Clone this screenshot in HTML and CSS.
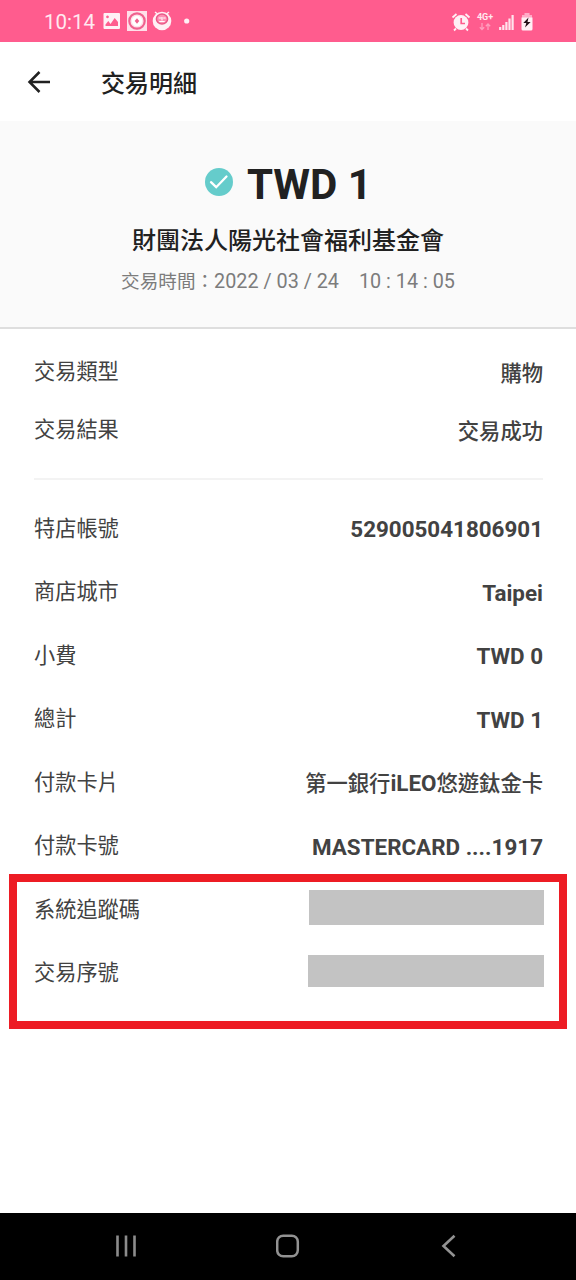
FILE: index.html
```html
<!DOCTYPE html>
<html lang="zh-Hant">
<head>
<meta charset="utf-8">
<title>交易明細</title>
<link rel="stylesheet" href="styles.css">
</head>
<body>
<div class="screen">
  <div class="status">
    <span class="clock">10:14</span>
    <svg class="notices" width="96" height="24" viewBox="0 0 96 24">
      <path fill="#fff0f5" fill-rule="evenodd" d="M4.500 3h14.500q1 0 1 1v14q0 1-1 1H4.500q-1 0-1-1V4q0-1 1-1zM5.500 16h12.500v-4l-3.300-4-4.200 6-2.200-3-2.800 3.500zM7.500 5.500a1.400 1.400 0 1 0 .01 0z"/>
      <rect x="27" y="1" width="20" height="20" fill="#ffdfe9"/>
      <circle cx="37" cy="11" r="7.700" fill="none" stroke="#f0608e" stroke-width="2.200"/>
      <circle cx="37" cy="11" r="5.200" fill="#fff"/>
      <path d="M37 8.300l2.300 2.700-2.300 2.700-2.300-2.700z" fill="#f0608e"/>
      <circle cx="62" cy="11" r="9.300" fill="#fff0f5"/>
      <path d="M55 2l2.500 2M69 2l-2.500 2" stroke="#fff0f5" stroke-width="1.500"/>
      <ellipse cx="62" cy="9" rx="5.600" ry="5" fill="#ff8fb4" stroke="#e95a88" stroke-width="1.500"/>
      <path d="M58.700 8h2.500M63.200 8h2.500M59.200 11.500h5.500M62 7v3.500" stroke="#fff" stroke-width="1.100"/>
      <circle cx="86.700" cy="11" r="2.600" fill="#fff0f5"/>
    </svg>
    <div class="signals">
      <svg width="20" height="20" viewBox="0 0 20 20">
        <circle cx="10" cy="10.500" r="7.400" fill="#fff0f5"/>
        <path d="M1.500 5.500l4-3.500M18.500 5.500l-4-3.500M5 16.500l-2 2M15 16.500l2 2" stroke="#fff0f5" stroke-width="1.800"/>
        <path d="M10.200 6v5.500H14" fill="none" stroke="#ff5c8e" stroke-width="1.700"/>
      </svg>
      <div class="network">
        <span>4G+</span>
        <svg width="12" height="8" viewBox="0 0 12 8"><path d="M3 0v6M.8 4.200L3 6.500l2.200-2.300M9 7V1M6.800 3.200L9 1l2.200 2.200" fill="none" stroke="#ff9dbd" stroke-width="1.300"/></svg>
      </div>
      <svg width="15" height="18" viewBox="0 0 15 18">
        <path d="M1.200 14v3M4.300 12v5M7.400 9v8M10.500 5.500V17M13.600 2v15" stroke="#ffe4ed" stroke-width="2.200"/>
      </svg>
      <svg class="battery" width="12" height="18" viewBox="0 0 12 18">
        <path d="M3.500 0h5v2H11v3H1V2h2.500z" fill="#ffabc7"/>
        <path d="M.5 4.500h11V16q0 1.500-1.500 1.500H2Q.5 17.500.5 16z" fill="#fff0f5"/>
        <path d="M7.500 4.500L2.300 10h3L4 14.500 9.600 9H6.500z" fill="#241018"/>
      </svg>
    </div>
  </div>

  <header class="bar">
    <svg width="24" height="24" viewBox="0 0 24 24"><path d="M23 12H3M12.500 2L2.500 12l10 10" fill="none" stroke="#212121" stroke-width="2.500"/></svg>
    <h1>交易明細</h1>
  </header>

  <section class="summary">
    <div class="amount">
      <svg width="28" height="28" viewBox="0 0 28 28"><circle cx="14" cy="14" r="14" fill="#65cccb"/><path d="M6 14.200l5.200 5L21.500 8.500" fill="none" stroke="#fff" stroke-width="2.300" stroke-linecap="round"/></svg>
      <span>TWD 1</span>
    </div>
    <div class="merchant">財團法人陽光社會福利基金會</div>
    <div class="time"><span>交易時間：</span><span class="date">2022 / 03 / 24</span><span class="hour">10 : 14 : 05</span></div>
  </section>

  <main>
    <section class="group short">
      <div class="row"><span class="label">交易類型</span><span class="value">購物</span></div>
      <div class="row"><span class="label">交易結果</span><span class="value">交易成功</span></div>
    </section>
    <hr class="divider">
    <section class="group">
      <div class="row"><span class="label">特店帳號</span><span class="value latin">529005041806901</span></div>
      <div class="row"><span class="label">商店城市</span><span class="value latin">Taipei</span></div>
      <div class="row"><span class="label">小費</span><span class="value latin">TWD 0</span></div>
      <div class="row"><span class="label">總計</span><span class="value latin">TWD 1</span></div>
      <div class="row"><span class="label">付款卡片</span><span class="value">第一銀行<span class="latin">iLEO</span>悠遊鈦金卡</span></div>
      <div class="row"><span class="label">付款卡號</span><span class="value latin">MASTERCARD ....1917</span></div>
    </section>
    <section class="marked">
      <div class="row"><span class="label">系統追蹤碼</span><span class="mask"></span></div>
      <div class="row"><span class="label">交易序號</span><span class="mask wide"></span></div>
    </section>
  </main>

  <nav class="keys">
    <svg width="24" height="24" viewBox="0 0 24 24"><path d="M3.500 1.500v21M12 1.500v21M20.500 1.500v21" stroke="#8c8c8c" stroke-width="2.600"/></svg>
    <svg width="24" height="24" viewBox="0 0 24 24"><rect x="1.200" y="1.700" width="20.600" height="20.600" rx="6" fill="none" stroke="#929292" stroke-width="2.500"/></svg>
    <svg width="24" height="24" viewBox="0 0 24 24"><path d="M17.500 1.800L6.500 12l11 10.200" fill="none" stroke="#929292" stroke-width="2.600"/></svg>
  </nav>
</div>
</body>
</html>
```
FILE: styles.css
```css
* { box-sizing: border-box; }
body {
  margin: 0;
  background: #fff;
  font-family: Roboto, "Noto Sans CJK TC", sans-serif;
  color: #212121;
}
svg { display: block; flex: none; }
.screen { display: flex; flex-direction: column; height: 1280px; }

.status {
  display: flex;
  align-items: center;
  height: 42px;
  padding: 2px 43px 0 44px;
  background: #ff5c8e;
  color: #ffe9f0;
}
.clock { width: 56px; font-size: 20.5px; line-height: 24px; }
.signals { display: flex; align-items: center; margin-left: auto; }
.network {
  display: flex;
  flex-direction: column;
  align-items: center;
  gap: 1px;
  width: 18px;
  margin: 0 5px 0 5px;
  font-size: 9px;
  line-height: 9px;
  font-weight: 700;
}
.battery { margin-left: 7px; }

.bar {
  display: flex;
  align-items: center;
  gap: 50px;
  height: 79px;
  padding-left: 27px;
}
.bar h1 { margin: 4px 0 0; font-size: 24px; line-height: 32px; font-weight: 500; }

.summary {
  height: 208px;
  padding-top: 37px;
  background: #fafafa;
  border-bottom: 2px solid #dedede;
  text-align: center;
}
.amount {
  display: flex;
  justify-content: center;
  align-items: center;
  gap: 14px;
  height: 54px;
  padding-left: 1px;
  font-size: 42px;
  line-height: 54px;
  font-weight: 700;
}
.amount svg { margin-bottom: 7px; }
.merchant { height: 32px; margin-top: 13px; font-size: 24px; line-height: 32px; font-weight: 500; }
.time {
  display: flex;
  justify-content: center;
  align-items: baseline;
  height: 28px;
  margin-top: 11px;
  font-size: 18.600px;
  line-height: 28px;
  color: #7c7c7c;
}
.date, .hour { font-size: 19.800px; }
.date { margin-right: 20px; }

main { flex: 1; padding-top: 14px; }
.group { padding: 0 33px 0 34px; }
.row { display: flex; justify-content: space-between; align-items: center; height: 63.500px; }
.short .row { height: 58px; }
.label, .value { font-size: 21.200px; line-height: 30px; color: #424242; }
.value { font-weight: 500; padding-top: 3px; font-size: 21.300px; }
.latin { font-size: 22.400px; line-height: 1; font-weight: 700; }
.value.latin { padding-top: 1px; }
.divider { height: 2px; margin: 19px 33px 17px 34px; border: 0; background: #f3f3f3; }

.marked {
  height: 155px;
  margin: -4px 9px 0;
  padding: 0 15px 0 17px;
  border: 8px solid #ed1c24;
}
.marked .row:first-child { height: 54px; margin-bottom: 5px; }
.marked .label { padding-top: 1px; }
.mask { width: 235px; height: 35px; margin-bottom: 4px; background: #c3c3c3; }
.mask.wide { width: 236px; height: 32px; }

.keys {
  display: flex;
  align-items: center;
  justify-content: space-between;
  height: 67px;
  padding: 0 115px 1px 114px;
  background: #000;
}
```
